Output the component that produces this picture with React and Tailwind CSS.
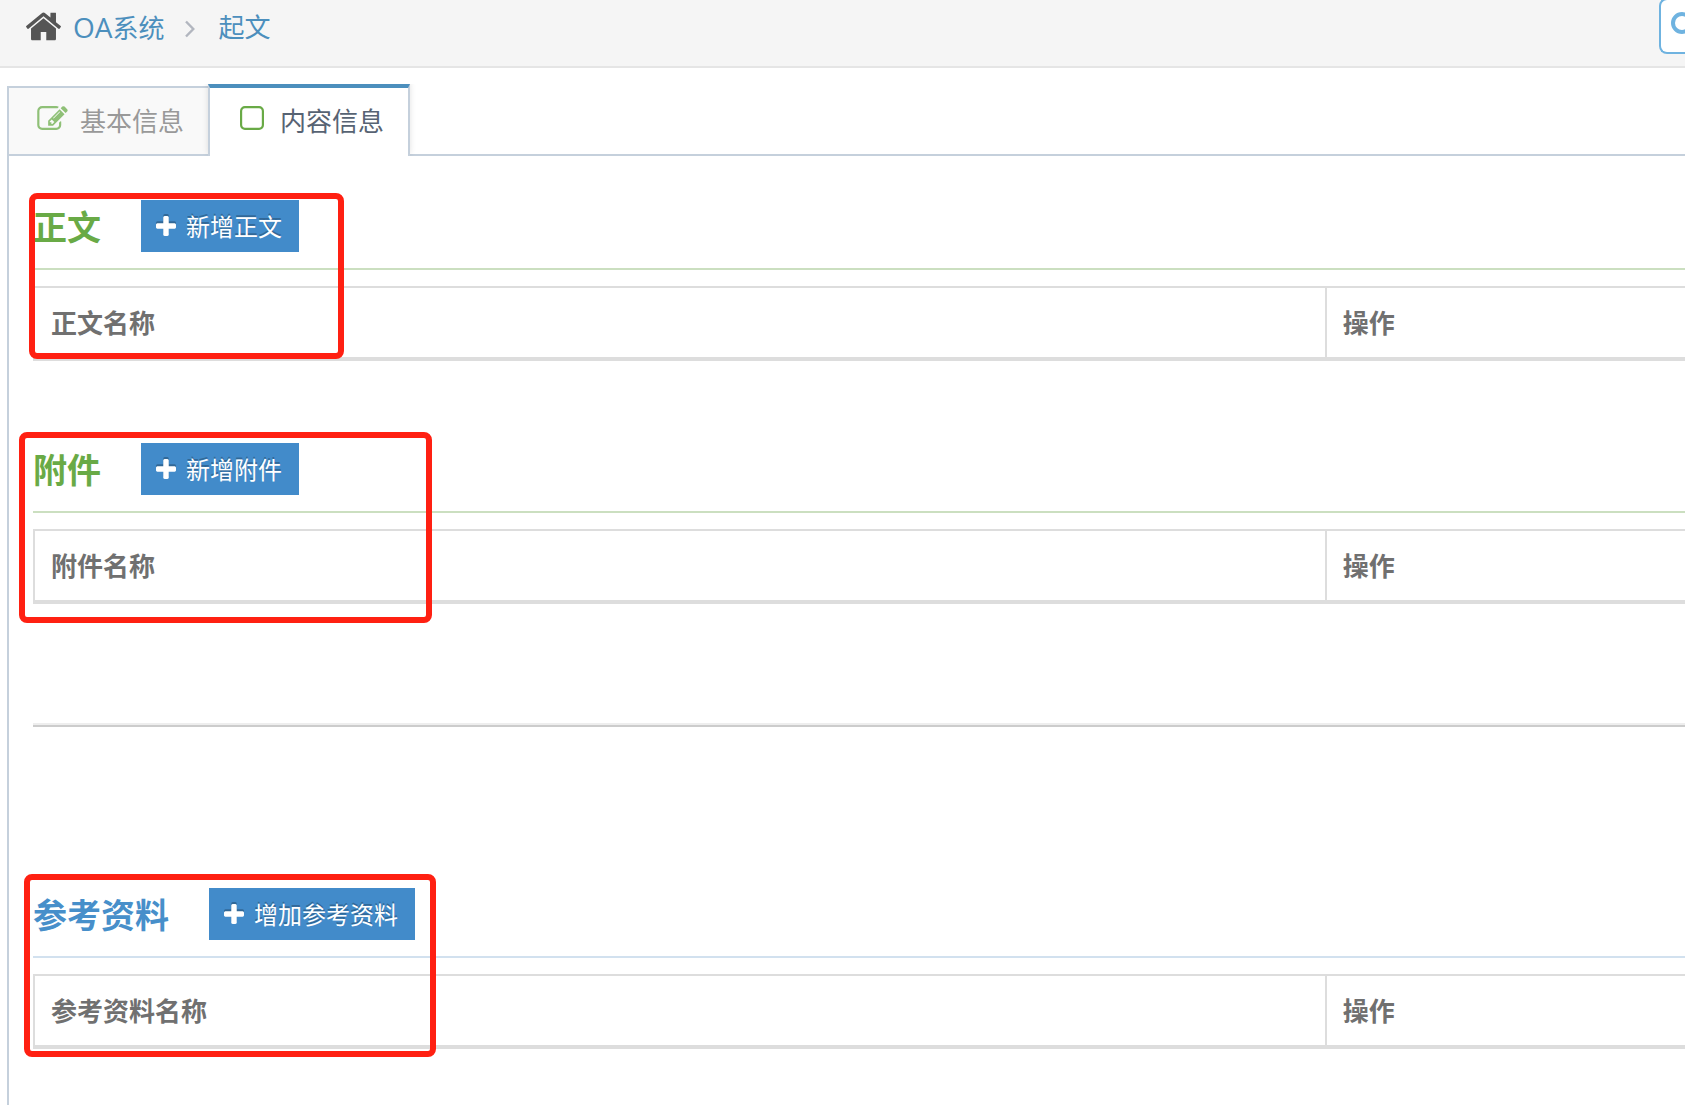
import React from "react";

function Glyph({ viewBox, d, className }) {
  return (
    <svg viewBox={viewBox} className={className} fill="currentColor" aria-hidden="true">
      <path d={d} />
    </svg>
  );
}

const HOME =
  "M1472 992v480q0 26-19 45t-45 19h-384v-384h-256v384h-384q-26 0-45-19t-19-45v-480q0-1 .5-3t.5-3l575-474 575 474q1 2 1 6zm223-69l-62 74q-8 9-21 11h-3q-13 0-21-7l-692-577-692 577q-12 8-24 7-13-2-21-11l-62-74q-8-10-7-23.5t11-21.5l719-599q32-26 76-26t76 26l244 204v-195q0-14 9-23t23-9h192q14 0 23 9t9 23v408l219 182q10 8 11 21.5t-7 23.5z";
const EDIT =
  "M888 1184l116-116-152-152-116 116v56h96v96h56zm440-720q-16-16-33 1l-350 350q-17 17-1 33t33-1l350-350q17-17 1-33zm80 594v190q0 119-84.5 203.5t-203.5 84.5h-832q-119 0-203.5-84.5t-84.5-203.5v-832q0-119 84.5-203.5t203.5-84.5h832q63 0 117 25 15 7 18 23 3 17-9 29l-49 49q-14 14-32 8-23-6-45-6h-832q-66 0-113 47t-47 113v832q0 66 47 113t113 47h832q66 0 113-47t47-113v-126q0-13 9-22l64-64q15-15 35-7t20 29zm-96-738l288 288-672 672h-288v-288zm444 132l-92 92-288-288 92-92q28-28 68-28t68 28l152 152q28 28 28 68t-28 68z";
const SQUARE =
  "M1312 256h-832q-66 0-113 47t-47 113v832q0 66 47 113t113 47h832q66 0 113-47t47-113v-832q0-66-47-113t-113-47zm288 160v832q0 119-84.5 203.5t-203.5 84.5h-832q-119 0-203.5-84.5t-84.5-203.5v-832q0-119 84.5-203.5t203.5-84.5h832q119 0 203.5 84.5t84.5 203.5z";
const PLUS =
  "M1600 736v192q0 40-28 68t-68 28h-416v416q0 40-28 68t-68 28h-192q-40 0-68-28t-28-68v-416h-416q-40 0-68-28t-28-68v-192q0-40 28-68t68-28h416v-416q0-40 28-68t68-28h192q40 0 68 28t28 68v416h416q40 0 68 28t28 68z";

function Section({ title, action, column, headingClass, lineClass, markClass }) {
  return (
    <section className="relative">
      <div className={"flex items-center gap-10 border-b-2 pb-4 " + lineClass}>
        <h2 className={"pt-0.5 text-[34px] leading-[50px] font-bold " + headingClass}>{title}</h2>
        <button
          type="button"
          className="flex h-[52px] items-center gap-[10px] bg-[#428bca] pt-px pr-[17px] pl-[15px] text-2xl text-white [text-shadow:0_-2px_0_rgba(0,0,0,0.25)]"
        >
          <Glyph viewBox="192 128 1408 1408" d={PLUS} className="mb-0.5 size-5 drop-shadow-[0_-2px_0_rgba(0,0,0,0.25)]" />
          {action}
        </button>
      </div>
      <table className="mt-4 w-full table-fixed border-separate border-spacing-0 text-left text-[26px] leading-[37px] text-[#707070]">
        <thead>
          <tr>
            <th scope="col" className="w-[78.2%] border-t-2 border-b-4 border-l-2 border-[#ddd] px-4 pt-[17px] pb-[15px] font-bold">
              {column}
            </th>
            <th scope="col" className="border-t-2 border-b-4 border-l-2 border-[#ddd] px-4 pt-[17px] pb-[15px] font-bold">
              操作
            </th>
          </tr>
        </thead>
      </table>
      <div aria-hidden="true" className={"pointer-events-none absolute rounded-lg border-6 border-[#ff2012] " + markClass} />
    </section>
  );
}

export default function App() {
  return (
    <div className="flex min-h-screen flex-col overflow-hidden bg-white font-['Open_Sans','Noto_Sans_CJK_SC',sans-serif]">
      <header className="flex h-[68px] items-start justify-between border-b-2 border-[#e5e5e5] bg-[#f5f5f5] pl-[26px]">
        <nav aria-label="breadcrumb" className="flex h-[54px] items-center text-[26px] leading-[40px] text-[#4c8fbd]">
          <Glyph viewBox="88 256 1616 1280" d={HOME} className="mb-0.5 h-[29px] w-[35px] text-[#555]" />
          <a href="#oa" className="ml-3"><span className="text-[28px]">OA</span>系统</a>
          <svg viewBox="0 0 10 18" className="mt-1 ml-5 h-[18px] w-[10px]" fill="none" stroke="#b2b6bf" strokeWidth="2.4" aria-hidden="true">
            <path d="M1 1.5 8.3 9 1 16.5" />
          </svg>
          <a href="#draft" className="ml-6">起文</a>
        </nav>
        <button
          type="button"
          aria-label="搜索"
          className="-mt-0.5 flex h-14 w-[26px] items-center overflow-hidden rounded-l-lg border-2 border-r-0 border-[#6fb3e0] bg-white pl-[10px]"
        >
          <svg viewBox="0 0 28 28" className="mb-1.5 size-7 shrink-0" fill="none" stroke="#6fb3e0" strokeWidth="4" aria-hidden="true">
            <circle cx="11" cy="14" r="9" />
            <path d="m17 20 7 7" />
          </svg>
        </button>
      </header>

      <div className="flex flex-1 flex-col pt-4 pl-[7px]">
        <div role="tablist" className="flex items-end text-[26px] leading-[40px]">
          <button
            type="button"
            role="tab"
            aria-selected="false"
            className="flex h-[70px] items-center gap-3 border-t-2 border-b-2 border-l-2 border-[#c5d0dc] bg-[#f9f9f9] pr-6 pl-7 text-[#999]"
          >
            <Glyph viewBox="0 128 1792 1408" d={EDIT} className="mb-1.5 h-6 w-[31px] text-[#8fc077]" />
            基本信息
          </button>
          <button
            type="button"
            role="tab"
            aria-selected="true"
            className="flex h-[72px] items-center gap-4 border-x-2 border-t-4 border-x-[#c5d0dc] border-t-[#4c8fbd] bg-white pr-6 pb-0.5 pl-[30px] text-[#576373] shadow-[0_-2px_6px_0_rgba(0,0,0,0.12)] [clip-path:inset(0_-6px_0_-6px)]"
          >
            <Glyph viewBox="192 128 1408 1408" d={SQUARE} className="mb-1.5 size-6 text-[#69aa46]" />
            内容信息
          </button>
          <div className="h-[2px] flex-1 bg-[#c5d0dc]" />
        </div>

        <main role="tabpanel" className="flex-1 border-l-2 border-[#c5d0dc] pt-11 pl-6">
          <Section
            title="正文"
            action="新增正文"
            column="正文名称"
            headingClass="text-[#69aa46]"
            lineClass="border-[#cbdfc0]"
            markClass="-top-[7px] -left-1 h-[166px] w-[315px]"
          />
          <div className="h-[82px]" />
          <Section
            title="附件"
            action="新增附件"
            column="附件名称"
            headingClass="text-[#69aa46]"
            lineClass="border-[#cbdfc0]"
            markClass="-top-[11px] -left-[14px] h-[191px] w-[413px]"
          />
          <hr className="mt-[119px] mb-[161px] h-1 border-t-2 border-b-2 border-t-[#eee] border-b-[#ccc]" />
          <Section
            title="参考资料"
            action="增加参考资料"
            column="参考资料名称"
            headingClass="text-[#478fca]"
            lineClass="border-[#d2e1ef]"
            markClass="-top-[14px] -left-[9px] h-[183px] w-[412px]"
          />
        </main>
      </div>
    </div>
  );
}
